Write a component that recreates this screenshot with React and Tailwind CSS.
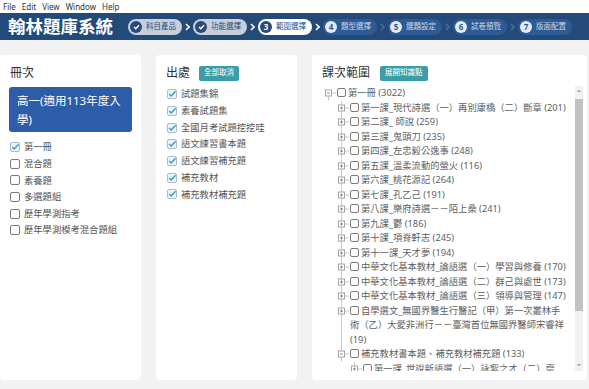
import React from 'react';

const FONT = { fontFamily: '"Noto Sans", "Noto Sans CJK TC", sans-serif' };

const steps = [
  { n: 1, label: '科目產品', state: 'done' },
  { n: 2, label: '功能選擇', state: 'done' },
  { n: 3, label: '範圍選擇', state: 'current' },
  { n: 4, label: '題型選擇', state: 'todo' },
  { n: 5, label: '選題設定', state: 'todo' },
  { n: 6, label: '試卷預覽', state: 'todo' },
  { n: 7, label: '版面配置', state: 'todo' },
];

const volumes = [
  { label: '第一冊', checked: true },
  { label: '混合題', checked: false },
  { label: '素養題', checked: false },
  { label: '多選題組', checked: false },
  { label: '歷年學測指考', checked: false },
  { label: '歷年學測模考混合題組', checked: false },
];

const sources = ['試題集錦', '素養試題集', '全國月考試題挖挖哇', '語文練習書本題', '語文練習補充題', '補充教材', '補充教材補充題'];

const lessons = [
  '第一課_現代詩選（一）再別康橋（二）斷章 (201)',
  '第二課_ 師說 (259)',
  '第三課_鬼頭刀 (235)',
  '第四課_左忠毅公逸事 (248)',
  '第五課_溫柔流動的螢火 (116)',
  '第六課_桃花源記 (264)',
  '第七課_孔乙己 (191)',
  '第八課_樂府詩選－－陌上桑 (241)',
  '第九課_鬱 (186)',
  '第十課_項脊軒志 (245)',
  '第十一課_天才夢 (194)',
  '中華文化基本教材_論語選（一）學習與修養 (170)',
  '中華文化基本教材_論語選（二）群己與處世 (173)',
  '中華文化基本教材_論語選（三）領導與管理 (147)',
];

const StepArrow = ({ faded }) => (
  <svg width="5" height="8" viewBox="0 0 5 8" className="mx-[3px] shrink-0">
    <path d="M1 1 L4 4 L1 7" fill="none" stroke={faded ? '#4b6d9b' : '#ffffff'} strokeWidth="1.6" />
  </svg>
);

const StepPill = ({ step }) => {
  const pill =
    step.state === 'done'
      ? 'bg-[#c6cfdb] text-[#2a4b78]'
      : step.state === 'current'
      ? 'bg-white text-[#2a4b78]'
      : 'bg-[#2e5b94] text-[#c9d6e8]';
  const circle =
    step.state === 'todo' ? 'bg-[#e4eaf2] text-[#2e5b94]' : 'bg-[#2a4b78] text-white';
  return (
    <div className={`flex items-center h-[16px] rounded-full pl-[2px] pr-[6px] gap-[4px] ${pill}`}>
      <div className={`w-[12px] h-[12px] rounded-full flex items-center justify-center text-[8px] font-bold ${circle}`}>
        {step.state === 'done' ? (
          <svg width="7" height="6" viewBox="0 0 7 6">
            <path d="M1 3 L2.8 4.8 L6 1.2" fill="none" stroke="#fff" strokeWidth="1.3" />
          </svg>
        ) : (
          step.n
        )}
      </div>
      <span className="text-[7.5px] leading-none whitespace-nowrap">{step.label}</span>
    </div>
  );
};

const CheckBox = ({ checked }) =>
  checked ? (
    <svg width="10" height="10" viewBox="0 0 10 10" className="shrink-0">
      <rect x="0.5" y="0.5" width="9" height="9" rx="1.5" fill="#eef5fa" stroke="#a9bccb" />
      <path d="M2.2 5 L4.2 7 L8.6 2.3" fill="none" stroke="#3d9cc4" strokeWidth="1.5" />
    </svg>
  ) : (
    <svg width="10" height="10" viewBox="0 0 10 10" className="shrink-0">
      <rect x="0.5" y="0.5" width="9" height="9" rx="1.5" fill="#fff" stroke="#7a7a7a" />
    </svg>
  );

const TreeBox = () => (
  <svg width="9" height="9" viewBox="0 0 9 9" className="inline-block align-[-1px] mr-[2px]">
    <rect x="0.5" y="0.5" width="8" height="8" rx="1.5" fill="#fff" stroke="#7c7c7c" />
  </svg>
);

const TreeIcon = ({ open }) => (
  <svg width="12" height="14.5" viewBox="0 0 12 14.5" className="shrink-0">
    <line x1="3.5" y1="0" x2="3.5" y2="14.5" stroke="#c9c9c9" />
    <rect x="0.5" y="4" width="6" height="6" fill="#fff" stroke="#a4a4a4" />
    <line x1="2" y1="7" x2="5" y2="7" stroke="#8a8a8a" />
    {!open && <line x1="3.5" y1="5.5" x2="3.5" y2="8.5" stroke="#8a8a8a" />}
    <line x1="7" y1="7" x2="11" y2="7" stroke="#c9c9c9" />
  </svg>
);

const TreeRow = ({ open, children }) => (
  <div className="flex">
    <div className="flex flex-col w-[12px] shrink-0">
      <TreeIcon open={open} />
      <div className="flex-1 ml-[3px] border-l border-[#c9c9c9]" />
    </div>
    <div className="whitespace-nowrap">
      <TreeBox />
      {children}
    </div>
  </div>
);

const Card = ({ className, children }) => (
  <div className={`bg-white rounded-[4px] flex flex-col ${className}`}>{children}</div>
);

const App = () => {
  return (
    <div className="w-[589px] h-[389px] bg-[#f2f2f2] flex flex-col overflow-hidden" style={FONT}>
      <div className="h-[13px] bg-white flex items-center gap-[6px] px-[3px] text-[8px] text-[#333] leading-none">
        <span>File</span>
        <span>Edit</span>
        <span>View</span>
        <span>Window</span>
        <span>Help</span>
      </div>

      <div className="h-[27px] bg-[#234a79] flex items-center pl-[8px]">
        <h1 className="text-[17.5px] font-semibold text-white leading-none mr-[15px] whitespace-nowrap">翰林題庫系統</h1>
        <div className="flex items-center">
          {steps.map((s, i) => (
            <React.Fragment key={s.n}>
              <StepPill step={s} />
              {i < steps.length - 1 && <StepArrow faded={i >= 3} />}
            </React.Fragment>
          ))}
        </div>
      </div>

      <div className="flex-1 flex gap-[15px] pt-[15px] pb-[9px] pr-[2px]">
        <Card className="w-[141px] px-[9px] pt-[9px]">
          <div className="h-[18px] flex items-center text-[12px] text-[#333] pl-[1px]">冊次</div>
          <div className="mt-[5px] bg-[#2d5da8] rounded-[3px] text-white text-[11.5px] leading-[19px] px-[8px] pt-[4px] pb-[3px]">
            高一(適用113年度入
            <br />
            學)
          </div>
          <div className="mt-[7px] flex flex-col">
            {volumes.map((v) => (
              <div key={v.label} className="h-[16.6px] flex items-center gap-[4px] pl-[1px] text-[9.3px] text-[#555] whitespace-nowrap">
                <CheckBox checked={v.checked} />
                <span>{v.label}</span>
              </div>
            ))}
          </div>
        </Card>

        <Card className="w-[141px] px-[10px] pt-[9px]">
          <div className="h-[18px] flex items-center gap-[9px]">
            <span className="text-[12px] text-[#333]">出處</span>
            <span className="bg-[#3b9ea6] text-white text-[7.5px] rounded-[2px] px-[5px] h-[15px] flex items-center">全部取消</span>
          </div>
          <div className="mt-[4px] flex flex-col">
            {sources.map((s) => (
              <div key={s} className="h-[16.7px] flex items-center gap-[4px] pl-[1px] text-[9.3px] text-[#555] whitespace-nowrap">
                <CheckBox checked />
                <span>{s}</span>
              </div>
            ))}
          </div>
        </Card>

        <Card className="flex-1 pl-[10px] pr-[4px] pt-[9px]">
          <div className="h-[18px] flex items-center gap-[10px]">
            <span className="text-[12px] text-[#333]">課次範圍</span>
            <span className="bg-[#3b9ea6] text-white text-[7.5px] rounded-[2px] px-[5px] h-[15px] flex items-center">展開知識點</span>
          </div>
          <div className="mt-[4px] h-[285px] flex overflow-hidden">
            <div className="flex-1 pl-[3px] text-[9.3px] leading-[14.5px] text-[#5e5e5e] overflow-hidden">
              <div className="flex">
                <svg width="12" height="14.5" viewBox="0 0 12 14.5" className="shrink-0">
                  <rect x="0.5" y="4" width="6" height="6" fill="#fff" stroke="#a4a4a4" />
                  <line x1="2" y1="7" x2="5" y2="7" stroke="#8a8a8a" />
                  <line x1="3.5" y1="10" x2="3.5" y2="14.5" stroke="#c9c9c9" />
                  <line x1="7" y1="7" x2="11" y2="7" stroke="#c9c9c9" />
                </svg>
                <div className="whitespace-nowrap">
                  <TreeBox />
                  第一冊 (3022)
                </div>
              </div>
              <div className="ml-[13px]">
                {lessons.map((l) => (
                  <TreeRow key={l}>{l}</TreeRow>
                ))}
                <TreeRow>
                  自學選文_無國界醫生行醫記（甲）第一次叢林手
                  <br />
                  術（乙）大愛非洲行－－臺灣首位無國界醫師宋睿祥
                  <br />
                  (19)
                </TreeRow>
                <TreeRow open>補充教材書本題、補充教材補充題 (133)</TreeRow>
                <div className="ml-[13px]">
                  <TreeRow>第一課_世說新語選（一）詠絮之才（二）齋</TreeRow>
                </div>
              </div>
            </div>
            <div className="w-[8px] shrink-0 bg-[#f1f1f1] flex flex-col items-center">
              <svg width="6" height="10" viewBox="0 0 6 10" className="shrink-0">
                <path d="M1 6 L3 3.5 L5 6 Z" fill="#a3a3a3" />
              </svg>
              <div className="w-full h-[212px] mt-[3px] bg-[#c1c1c1]" />
              <div className="flex-1" />
              <svg width="6" height="10" viewBox="0 0 6 10" className="shrink-0 mb-[1px]">
                <path d="M1 4 L3 6.5 L5 4 Z" fill="#a3a3a3" />
              </svg>
            </div>
          </div>
        </Card>
      </div>
    </div>
  );
};

export default App;
